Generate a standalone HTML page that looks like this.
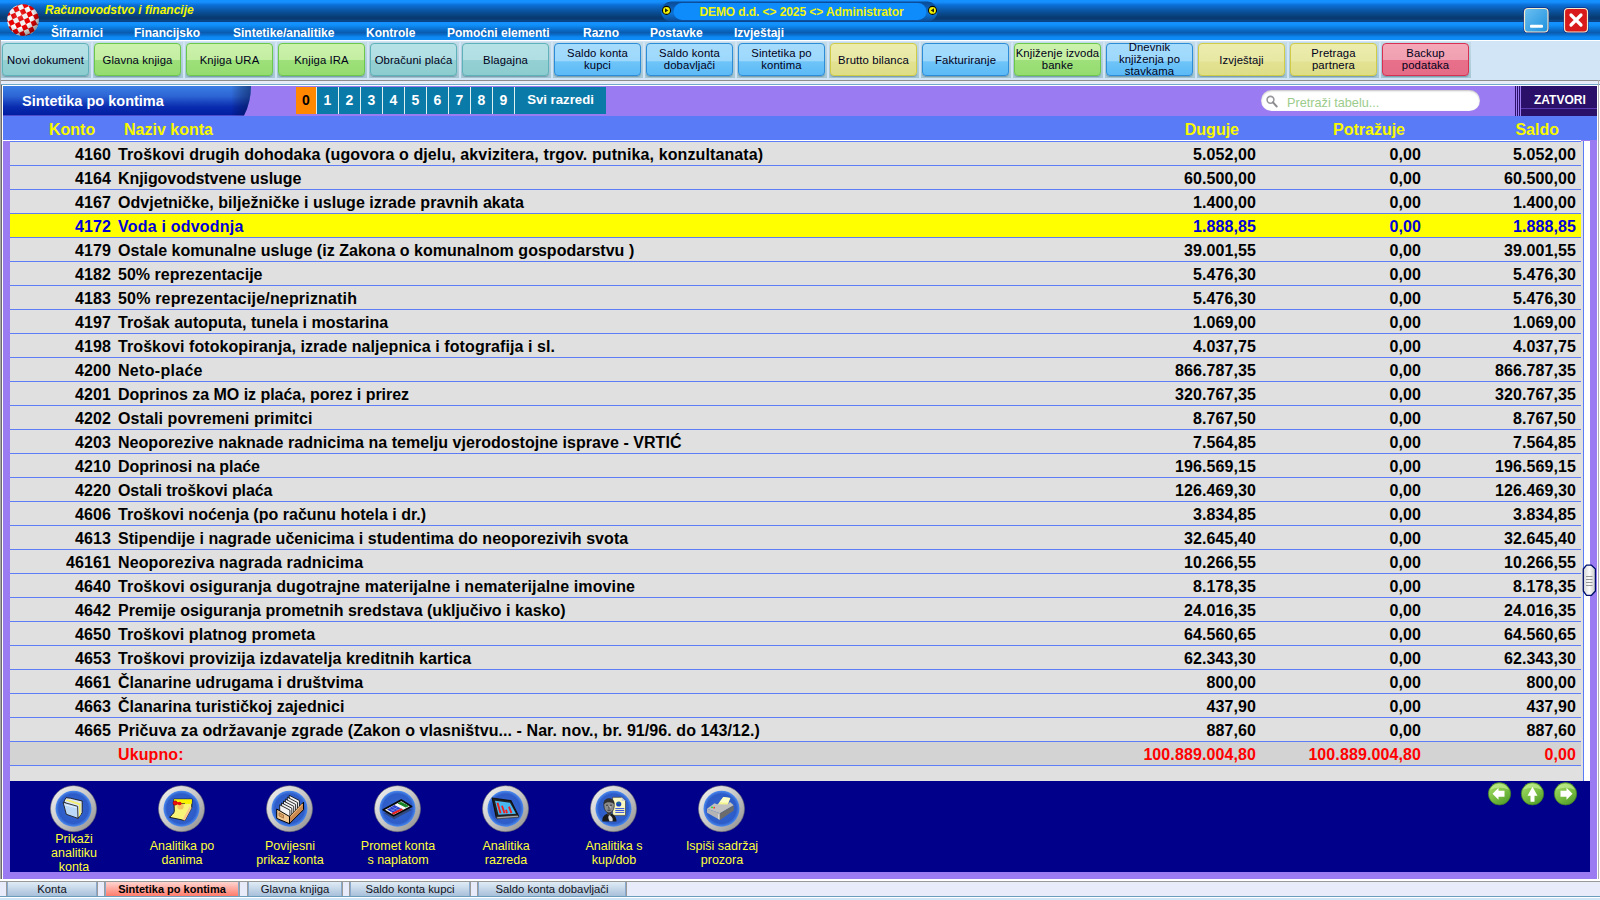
<!DOCTYPE html><html><head><meta charset="utf-8"><style>
*{box-sizing:border-box;margin:0;padding:0}
html,body{width:1600px;height:900px;overflow:hidden;background:#fff;font-family:"Liberation Sans",sans-serif}
.a{position:absolute}
#title{left:0;top:0;width:1600px;height:22px;background:linear-gradient(#1590ff 0px,#1590ff 2px,#0b6fd6 5px,#0a58a8 10px,#083c74 17px,#083a70 19px,#0a4a90 21px,#0a3e80 22px)}
#menu{left:0;top:22px;width:1600px;height:18px;background:linear-gradient(#1592ff 0px,#1090fa 3px,#0a6cc8 8px,#0a5cb0 10.5px,#0a70d0 13px,#0d88f4 15px,#0d8cf8 18px)}
.mi{top:25px;font-size:12px;font-weight:bold;color:#fff;white-space:nowrap;line-height:16px}
#apptitle{left:45px;top:2px;font-size:12px;font-weight:bold;font-style:italic;color:#f4f800;white-space:nowrap;line-height:16px}
#pill{left:661px;top:1px;width:277px;height:21px;border-radius:11px;background:#0a3a78}
#pill2{left:672px;top:3px;width:256px;height:17px;border-radius:9px;background:linear-gradient(#1a8cf8,#1080f0)}
.dot{width:9px;height:9px;border-radius:50%;background:#f0f000;border:1px solid #202000}
#pilltext{left:663px;top:4px;width:277px;text-align:center;font-size:12px;font-weight:bold;color:#f0f410;letter-spacing:-0.08px;line-height:16px;white-space:nowrap}
#toolbar{left:0;top:40px;width:1600px;height:40px;background:#d2e5f6;border-top:1px solid #fff;border-left:1px solid #a0a0a0}
.btn{top:43px;width:87px;height:33px;padding-top:1px;border-radius:4px;font-size:11.3px;color:#000018;text-align:center;display:flex;align-items:center;justify-content:center;line-height:12px;letter-spacing:0.12px;box-shadow:0 1px 1px rgba(60,100,120,0.45)}
.cell{top:42px;width:90px;height:36px;background:linear-gradient(#c4dce8,#a6c8d4)}
.teal{background:linear-gradient(#b6e2e6 0%,#b0dee2 50%,#94d0d4 52%,#8ccccf 100%);border:1px solid #5fb2b9}
.green{background:linear-gradient(#ccf2ac 0%,#c4eea2 50%,#9ee07a 52%,#94dc70 100%);border:1px solid #6cc84c}
.blue{background:linear-gradient(#a6dcfc 0%,#9cd8fc 55%,#6ec4f8 57%,#5cbaf6 100%);border:1px solid #2c8cd8}
.yellow{background:linear-gradient(#ececae 0%,#e8e8a4 55%,#e2e292 58%,#dede88 100%);border:1px solid #d0cc48}
.red{background:linear-gradient(#f4a8b8 0%,#f0a0b0 50%,#e8708a 52%,#e46c86 100%);border:1px solid #d83050}
#tbline{left:0;top:80px;width:1600px;height:1px;background:#8c8c8c}
#tbunder{left:0;top:81px;width:1600px;height:4px;background:#e6ecf8;border-bottom:1px solid #70a8c8}
#frame{left:0;top:80px;width:1600px;height:820px;border-left:1px solid #a0a0a0}
#purple{left:3px;top:86px;width:1594px;height:793px;background:#9b7bf2}
#ttl{left:3px;top:86px;width:248px;height:30px;background:linear-gradient(#3c7ee2 0%,#2a60d0 40%,#0a28b0 75%,#0018a0 100%);border-radius:0 0 40px 0/0 0 90px 0}
#ttltext{left:22px;top:93px;font-size:14.5px;font-weight:bold;color:#fff;white-space:nowrap;line-height:17px}
.tab{top:87px;height:27px;width:22px;background:#0a7aa8;color:#fff;font-size:14px;font-weight:bold;text-align:center;line-height:26px;border-left:1px solid #e0f0f0}
#hdr{left:3px;top:116px;width:1594px;height:24px;background:#5a7bf7}
.h{top:121px;font-size:16px;font-weight:bold;color:#f8f800;white-space:nowrap;line-height:18px}
#hwl{left:3px;top:140px;width:1578px;height:1px;background:#fff}
#tbl{left:10px;top:141px;width:1574px;height:640px;background:#e0e0e0;border-right:1px solid #5a7bf7}
#sbw{left:1584px;top:141px;width:6px;height:640px;background:#fff}
.r{left:10px;width:1571px;height:24px;border-top:1px solid #5f7df4;background:#e0e0e0}
.c{font-size:16px;font-weight:bold;color:#000;white-space:nowrap;line-height:18px;letter-spacing:0.1px}
#nav{left:10px;top:781px;width:1580px;height:91px;background:#00008a}
.il{font-size:12.5px;color:#ffff38;text-align:center;line-height:14px;white-space:nowrap}
#bot{left:0;top:879px;width:1600px;height:21px;background:#e8ecfa;border-top:2px solid #fff}
.bt{top:882px;height:14px;font-size:11.3px;color:#101020;text-align:center;line-height:14px;background:linear-gradient(#e0ecf6,#a8c0da);border-left:1px solid #88a8cc;border-right:1px solid #88a8cc;box-shadow:-1px 0 0 #9a9a9a,1px 0 0 #9a9a9a;white-space:nowrap}
</style></head><body>
<div class="a" id="title"></div><div class="a" id="menu"></div>
<div class="a" id="apptitle">Računovodstvo i financije</div>
<div class="a mi" style="left:51px">Šifrarnici</div>
<div class="a mi" style="left:134px">Financijsko</div>
<div class="a mi" style="left:233px">Sintetike/analitike</div>
<div class="a mi" style="left:366px">Kontrole</div>
<div class="a mi" style="left:447px">Pomoćni elementi</div>
<div class="a mi" style="left:583px">Razno</div>
<div class="a mi" style="left:650px">Postavke</div>
<div class="a mi" style="left:734px">Izvještaji</div>
<svg class="a" style="left:655px;top:0" width="290" height="24"><defs><linearGradient id="po" x1="0" y1="0" x2="0" y2="1"><stop offset="0" stop-color="#0a4a94"/><stop offset="0.3" stop-color="#0a5cb4"/><stop offset="0.6" stop-color="#0d74d8"/><stop offset="1" stop-color="#0a4a94"/></linearGradient></defs>
<rect x="6" y="1.5" width="276.5" height="20" rx="10" fill="url(#po)"/><rect x="18.5" y="3" width="253" height="17" rx="8.5" fill="#0e8cfc"/>
<circle cx="11.5" cy="10.4" r="4" fill="#f4f400" stroke="#000" stroke-width="1.1"/><path d="M10,8.2 L13.3,10.4 L10,12.6 Z" fill="#202010"/>
<circle cx="277.5" cy="10.4" r="4" fill="#f4f400" stroke="#000" stroke-width="1.1"/><path d="M279,8.2 L275.7,10.4 L279,12.6 Z" fill="#202010"/></svg>
<div class="a" id="pilltext">DEMO d.d. &lt;&gt; 2025 &lt;&gt; Administrator</div>
<svg class="a" style="left:7px;top:4px" width="32" height="32" viewBox="0 0 32 32"><defs><pattern id="chk" width="10" height="10" patternUnits="userSpaceOnUse" patternTransform="rotate(-25 16 16) translate(2 1)"><rect width="10" height="10" fill="#fff"/><rect width="5" height="5" fill="#f00000"/><rect x="5" y="5" width="5" height="5" fill="#f00000"/></pattern><radialGradient id="bsh" cx="0.38" cy="0.35" r="0.7"><stop offset="0" stop-color="#fff" stop-opacity="0.25"/><stop offset="0.55" stop-color="#000" stop-opacity="0"/><stop offset="1" stop-color="#000" stop-opacity="0.45"/></radialGradient></defs><circle cx="16" cy="16" r="15.8" fill="url(#chk)"/><circle cx="16" cy="16" r="15.8" fill="url(#bsh)"/></svg>
<svg class="a" style="left:1520px;top:4px" width="75" height="32" viewBox="0 0 75 32"><defs><linearGradient id="ming" x1="0" y1="0" x2="1" y2="1"><stop offset="0" stop-color="#6cc0f2"/><stop offset="1" stop-color="#1e90dc"/></linearGradient></defs>
<rect x="3.5" y="3.5" width="25.5" height="25.5" rx="4" fill="#0a1a80"/><rect x="4.5" y="4.5" width="23.5" height="23.5" rx="3.5" fill="url(#ming)" stroke="#f4ecc8" stroke-width="1.2"/><rect x="10" y="20.7" width="13" height="3" rx="1" fill="#fff"/>
<rect x="43.5" y="3.5" width="25" height="25.5" rx="4" fill="#0a1a80"/><rect x="44.5" y="4.5" width="23" height="23.5" rx="3.5" fill="#d81a1a" stroke="#f4ecc8" stroke-width="1.2"/><path d="M51,11 L61,21 M61,11 L51,21" stroke="#fff" stroke-width="3.2" stroke-linecap="round"/></svg>
<div class="a" id="toolbar"></div>
<div class="a cell" style="left:1px"></div>
<div class="a btn teal" style="left:2px;">Novi dokument</div>
<div class="a cell" style="left:93px"></div>
<div class="a btn green" style="left:94px;">Glavna knjiga</div>
<div class="a cell" style="left:185px"></div>
<div class="a btn green" style="left:186px;">Knjiga URA</div>
<div class="a cell" style="left:277px"></div>
<div class="a btn green" style="left:278px;">Knjiga IRA</div>
<div class="a cell" style="left:369px"></div>
<div class="a btn teal" style="left:370px;">Obračuni plaća</div>
<div class="a cell" style="left:461px"></div>
<div class="a btn teal" style="left:462px;">Blagajna</div>
<div class="a cell" style="left:553px"></div>
<div class="a btn blue" style="left:554px;padding-top:0;padding-bottom:1.5px">Saldo konta<br>kupci</div>
<div class="a cell" style="left:645px"></div>
<div class="a btn blue" style="left:646px;padding-top:0;padding-bottom:1.5px">Saldo konta<br>dobavljači</div>
<div class="a cell" style="left:737px"></div>
<div class="a btn blue" style="left:738px;padding-top:0;padding-bottom:1.5px">Sintetika po<br>kontima</div>
<div class="a cell" style="left:829px"></div>
<div class="a btn yellow" style="left:830px;">Brutto bilanca</div>
<div class="a cell" style="left:921px"></div>
<div class="a btn blue" style="left:922px;">Fakturiranje</div>
<div class="a cell" style="left:1013px"></div>
<div class="a btn green" style="left:1014px;padding-top:0;padding-bottom:1.5px">Knjiženje izvoda<br>banke</div>
<div class="a cell" style="left:1105px"></div>
<div class="a btn blue" style="left:1106px;padding-top:0;padding-bottom:1.5px">Dnevnik<br>knjiženja po<br>stavkama</div>
<div class="a cell" style="left:1197px"></div>
<div class="a btn yellow" style="left:1198px;">Izvještaji</div>
<div class="a cell" style="left:1289px"></div>
<div class="a btn yellow" style="left:1290px;padding-top:0;padding-bottom:1.5px">Pretraga<br>partnera</div>
<div class="a cell" style="left:1381px"></div>
<div class="a btn red" style="left:1382px;padding-top:0;padding-bottom:1.5px">Backup<br>podataka</div>
<div class="a" id="tbline"></div><div class="a" id="tbunder"></div>
<div class="a" style="left:0;top:40px;width:1px;height:860px;background:#a8a8a8"></div><div class="a" style="left:1px;top:85px;width:1px;height:795px;background:#6a6a6a"></div><div class="a" style="left:1598px;top:80px;width:1px;height:802px;background:#b0b0b0"></div><div class="a" id="purple"></div>
<svg class="a" style="left:0;top:86px" width="260" height="30"><defs><linearGradient id="tg" x1="0" y1="0" x2="0" y2="1"><stop offset="0" stop-color="#3a7ee4"/><stop offset="0.35" stop-color="#2c64d4"/><stop offset="0.7" stop-color="#0a2cb0"/><stop offset="1" stop-color="#001ca0"/></linearGradient><linearGradient id="tsh" x1="0" y1="0" x2="1" y2="0"><stop offset="0" stop-color="#000" stop-opacity="0"/><stop offset="0.92" stop-color="#000" stop-opacity="0"/><stop offset="1" stop-color="#001040" stop-opacity="0.5"/></linearGradient></defs><path d="M3,0 H251 A51,58.6 0 0 1 244,29.6 H3 Z" fill="url(#tg)"/><path d="M3,0 H251 A51,58.6 0 0 1 244,29.6 H3 Z" fill="url(#tsh)"/></svg><div class="a" id="ttltext">Sintetika po kontima</div>
<div class="a tab" style="left:296px;background:#ff8800;color:#000;border-left:none;width:20px">0</div>
<div class="a tab" style="left:316px">1</div>
<div class="a tab" style="left:338px">2</div>
<div class="a tab" style="left:360px">3</div>
<div class="a tab" style="left:382px">4</div>
<div class="a tab" style="left:404px">5</div>
<div class="a tab" style="left:426px">6</div>
<div class="a tab" style="left:448px">7</div>
<div class="a tab" style="left:470px">8</div>
<div class="a tab" style="left:492px">9</div>
<div class="a tab" style="left:514px;width:92px;font-size:13.2px">Svi razredi</div>
<div class="a" style="left:1261px;top:90px;width:219px;height:21px;border-radius:11px;background:#fff;box-shadow:inset 0 1px 2px rgba(0,0,0,0.25)"></div>
<div class="a" style="left:1287px;top:95px;font-size:12.7px;color:#9ccc8c;line-height:16px;white-space:nowrap">Pretraži tabelu...</div>
<svg class="a" style="left:1264px;top:94px" width="14" height="14"><circle cx="6.5" cy="5.8" r="3.4" fill="none" stroke="#98989c" stroke-width="1.6"/><path d="M9,8.4 L12.6,12.4" stroke="#8c8c90" stroke-width="2.1" stroke-linecap="round"/></svg>
<div class="a" style="left:1521px;top:86px;width:76px;height:30px;background:#2a1068"></div><div class="a" style="left:1521px;top:108px;width:76px;height:1px;background:#5a3ab0"></div><div class="a" style="left:1517px;top:86px;width:1px;height:30px;background:#2a1068"></div><div class="a" style="left:1519px;top:86px;width:1px;height:30px;background:#2a1068"></div>
<div class="a" style="left:1515px;top:86px;width:1px;height:30px;background:#2a1068"></div>
<div class="a" style="left:1534px;top:92px;font-size:12px;font-weight:bold;color:#fff;line-height:16px;white-space:nowrap">ZATVORI</div>
<div class="a" id="hdr"></div>
<div class="a h" style="left:49px">Konto</div><div class="a h" style="left:124px">Naziv konta</div>
<div class="a h" style="right:361px">Duguje</div><div class="a h" style="right:195px">Potražuje</div><div class="a h" style="right:41px">Saldo</div>
<div class="a" id="tbl"></div><div class="a" id="sbw"></div><div class="a" id="hwl"></div>
<div class="a r" style="top:141px;background:#e0e0e0"></div>
<div class="a c" style="top:146px;right:1489px;color:#000">4160</div>
<div class="a c" style="top:146px;left:118px;color:#000;letter-spacing:0.106px">Troškovi drugih dohodaka (ugovora o djelu, akvizitera, trgov. putnika, konzultanata)</div>
<div class="a c" style="top:146px;right:344px;color:#000">5.052,00</div>
<div class="a c" style="top:146px;right:179px;color:#000">0,00</div>
<div class="a c" style="top:146px;right:24px;color:#000">5.052,00</div>
<div class="a r" style="top:165px;background:#e0e0e0"></div>
<div class="a c" style="top:170px;right:1489px;color:#000">4164</div>
<div class="a c" style="top:170px;left:118px;color:#000;letter-spacing:-0.077px">Knjigovodstvene usluge</div>
<div class="a c" style="top:170px;right:344px;color:#000">60.500,00</div>
<div class="a c" style="top:170px;right:179px;color:#000">0,00</div>
<div class="a c" style="top:170px;right:24px;color:#000">60.500,00</div>
<div class="a r" style="top:189px;background:#e0e0e0"></div>
<div class="a c" style="top:194px;right:1489px;color:#000">4167</div>
<div class="a c" style="top:194px;left:118px;color:#000;letter-spacing:0.043px">Odvjetničke, bilježničke i usluge izrade pravnih akata</div>
<div class="a c" style="top:194px;right:344px;color:#000">1.400,00</div>
<div class="a c" style="top:194px;right:179px;color:#000">0,00</div>
<div class="a c" style="top:194px;right:24px;color:#000">1.400,00</div>
<div class="a r" style="top:213px;background:#ffff00"></div>
<div class="a c" style="top:218px;right:1489px;color:#0000d8">4172</div>
<div class="a c" style="top:218px;left:118px;color:#0000d8;letter-spacing:0.209px">Voda i odvodnja</div>
<div class="a c" style="top:218px;right:344px;color:#0000d8">1.888,85</div>
<div class="a c" style="top:218px;right:179px;color:#0000d8">0,00</div>
<div class="a c" style="top:218px;right:24px;color:#0000d8">1.888,85</div>
<div class="a r" style="top:237px;background:#e0e0e0"></div>
<div class="a c" style="top:242px;right:1489px;color:#000">4179</div>
<div class="a c" style="top:242px;left:118px;color:#000;letter-spacing:0.024px">Ostale komunalne usluge (iz Zakona o komunalnom gospodarstvu )</div>
<div class="a c" style="top:242px;right:344px;color:#000">39.001,55</div>
<div class="a c" style="top:242px;right:179px;color:#000">0,00</div>
<div class="a c" style="top:242px;right:24px;color:#000">39.001,55</div>
<div class="a r" style="top:261px;background:#e0e0e0"></div>
<div class="a c" style="top:266px;right:1489px;color:#000">4182</div>
<div class="a c" style="top:266px;left:118px;color:#000;letter-spacing:0.025px">50% reprezentacije</div>
<div class="a c" style="top:266px;right:344px;color:#000">5.476,30</div>
<div class="a c" style="top:266px;right:179px;color:#000">0,00</div>
<div class="a c" style="top:266px;right:24px;color:#000">5.476,30</div>
<div class="a r" style="top:285px;background:#e0e0e0"></div>
<div class="a c" style="top:290px;right:1489px;color:#000">4183</div>
<div class="a c" style="top:290px;left:118px;color:#000;letter-spacing:0.177px">50% reprezentacije/nepriznatih</div>
<div class="a c" style="top:290px;right:344px;color:#000">5.476,30</div>
<div class="a c" style="top:290px;right:179px;color:#000">0,00</div>
<div class="a c" style="top:290px;right:24px;color:#000">5.476,30</div>
<div class="a r" style="top:309px;background:#e0e0e0"></div>
<div class="a c" style="top:314px;right:1489px;color:#000">4197</div>
<div class="a c" style="top:314px;left:118px;color:#000;letter-spacing:0.024px">Trošak autoputa, tunela i mostarina</div>
<div class="a c" style="top:314px;right:344px;color:#000">1.069,00</div>
<div class="a c" style="top:314px;right:179px;color:#000">0,00</div>
<div class="a c" style="top:314px;right:24px;color:#000">1.069,00</div>
<div class="a r" style="top:333px;background:#e0e0e0"></div>
<div class="a c" style="top:338px;right:1489px;color:#000">4198</div>
<div class="a c" style="top:338px;left:118px;color:#000;letter-spacing:0.082px">Troškovi fotokopiranja, izrade naljepnica i fotografija i sl.</div>
<div class="a c" style="top:338px;right:344px;color:#000">4.037,75</div>
<div class="a c" style="top:338px;right:179px;color:#000">0,00</div>
<div class="a c" style="top:338px;right:24px;color:#000">4.037,75</div>
<div class="a r" style="top:357px;background:#e0e0e0"></div>
<div class="a c" style="top:362px;right:1489px;color:#000">4200</div>
<div class="a c" style="top:362px;left:118px;color:#000;letter-spacing:0.3px">Neto-plaće</div>
<div class="a c" style="top:362px;right:344px;color:#000">866.787,35</div>
<div class="a c" style="top:362px;right:179px;color:#000">0,00</div>
<div class="a c" style="top:362px;right:24px;color:#000">866.787,35</div>
<div class="a r" style="top:381px;background:#e0e0e0"></div>
<div class="a c" style="top:386px;right:1489px;color:#000">4201</div>
<div class="a c" style="top:386px;left:118px;color:#000;letter-spacing:-0.039px">Doprinos za MO iz plaća, porez i prirez</div>
<div class="a c" style="top:386px;right:344px;color:#000">320.767,35</div>
<div class="a c" style="top:386px;right:179px;color:#000">0,00</div>
<div class="a c" style="top:386px;right:24px;color:#000">320.767,35</div>
<div class="a r" style="top:405px;background:#e0e0e0"></div>
<div class="a c" style="top:410px;right:1489px;color:#000">4202</div>
<div class="a c" style="top:410px;left:118px;color:#000;letter-spacing:0.097px">Ostali povremeni primitci</div>
<div class="a c" style="top:410px;right:344px;color:#000">8.767,50</div>
<div class="a c" style="top:410px;right:179px;color:#000">0,00</div>
<div class="a c" style="top:410px;right:24px;color:#000">8.767,50</div>
<div class="a r" style="top:429px;background:#e0e0e0"></div>
<div class="a c" style="top:434px;right:1489px;color:#000">4203</div>
<div class="a c" style="top:434px;left:118px;color:#000;letter-spacing:0.048px">Neoporezive naknade radnicima na temelju vjerodostojne isprave - VRTIĆ</div>
<div class="a c" style="top:434px;right:344px;color:#000">7.564,85</div>
<div class="a c" style="top:434px;right:179px;color:#000">0,00</div>
<div class="a c" style="top:434px;right:24px;color:#000">7.564,85</div>
<div class="a r" style="top:453px;background:#e0e0e0"></div>
<div class="a c" style="top:458px;right:1489px;color:#000">4210</div>
<div class="a c" style="top:458px;left:118px;color:#000;letter-spacing:-0.067px">Doprinosi na plaće</div>
<div class="a c" style="top:458px;right:344px;color:#000">196.569,15</div>
<div class="a c" style="top:458px;right:179px;color:#000">0,00</div>
<div class="a c" style="top:458px;right:24px;color:#000">196.569,15</div>
<div class="a r" style="top:477px;background:#e0e0e0"></div>
<div class="a c" style="top:482px;right:1489px;color:#000">4220</div>
<div class="a c" style="top:482px;left:118px;color:#000;letter-spacing:-0.106px">Ostali troškovi plaća</div>
<div class="a c" style="top:482px;right:344px;color:#000">126.469,30</div>
<div class="a c" style="top:482px;right:179px;color:#000">0,00</div>
<div class="a c" style="top:482px;right:24px;color:#000">126.469,30</div>
<div class="a r" style="top:501px;background:#e0e0e0"></div>
<div class="a c" style="top:506px;right:1489px;color:#000">4606</div>
<div class="a c" style="top:506px;left:118px;color:#000;letter-spacing:0.012px">Troškovi noćenja (po računu hotela i dr.)</div>
<div class="a c" style="top:506px;right:344px;color:#000">3.834,85</div>
<div class="a c" style="top:506px;right:179px;color:#000">0,00</div>
<div class="a c" style="top:506px;right:24px;color:#000">3.834,85</div>
<div class="a r" style="top:525px;background:#e0e0e0"></div>
<div class="a c" style="top:530px;right:1489px;color:#000">4613</div>
<div class="a c" style="top:530px;left:118px;color:#000;letter-spacing:0.053px">Stipendije i nagrade učenicima i studentima do neoporezivih svota</div>
<div class="a c" style="top:530px;right:344px;color:#000">32.645,40</div>
<div class="a c" style="top:530px;right:179px;color:#000">0,00</div>
<div class="a c" style="top:530px;right:24px;color:#000">32.645,40</div>
<div class="a r" style="top:549px;background:#e0e0e0"></div>
<div class="a c" style="top:554px;right:1489px;color:#000">46161</div>
<div class="a c" style="top:554px;left:118px;color:#000;letter-spacing:0.116px">Neoporeziva nagrada radnicima</div>
<div class="a c" style="top:554px;right:344px;color:#000">10.266,55</div>
<div class="a c" style="top:554px;right:179px;color:#000">0,00</div>
<div class="a c" style="top:554px;right:24px;color:#000">10.266,55</div>
<div class="a r" style="top:573px;background:#e0e0e0"></div>
<div class="a c" style="top:578px;right:1489px;color:#000">4640</div>
<div class="a c" style="top:578px;left:118px;color:#000;letter-spacing:0.129px">Troškovi osiguranja dugotrajne materijalne i nematerijalne imovine</div>
<div class="a c" style="top:578px;right:344px;color:#000">8.178,35</div>
<div class="a c" style="top:578px;right:179px;color:#000">0,00</div>
<div class="a c" style="top:578px;right:24px;color:#000">8.178,35</div>
<div class="a r" style="top:597px;background:#e0e0e0"></div>
<div class="a c" style="top:602px;right:1489px;color:#000">4642</div>
<div class="a c" style="top:602px;left:118px;color:#000;letter-spacing:-0.01px">Premije osiguranja prometnih sredstava (uključivo i kasko)</div>
<div class="a c" style="top:602px;right:344px;color:#000">24.016,35</div>
<div class="a c" style="top:602px;right:179px;color:#000">0,00</div>
<div class="a c" style="top:602px;right:24px;color:#000">24.016,35</div>
<div class="a r" style="top:621px;background:#e0e0e0"></div>
<div class="a c" style="top:626px;right:1489px;color:#000">4650</div>
<div class="a c" style="top:626px;left:118px;color:#000;letter-spacing:0.065px">Troškovi platnog prometa</div>
<div class="a c" style="top:626px;right:344px;color:#000">64.560,65</div>
<div class="a c" style="top:626px;right:179px;color:#000">0,00</div>
<div class="a c" style="top:626px;right:24px;color:#000">64.560,65</div>
<div class="a r" style="top:645px;background:#e0e0e0"></div>
<div class="a c" style="top:650px;right:1489px;color:#000">4653</div>
<div class="a c" style="top:650px;left:118px;color:#000;letter-spacing:0.096px">Troškovi provizija izdavatelja kreditnih kartica</div>
<div class="a c" style="top:650px;right:344px;color:#000">62.343,30</div>
<div class="a c" style="top:650px;right:179px;color:#000">0,00</div>
<div class="a c" style="top:650px;right:24px;color:#000">62.343,30</div>
<div class="a r" style="top:669px;background:#e0e0e0"></div>
<div class="a c" style="top:674px;right:1489px;color:#000">4661</div>
<div class="a c" style="top:674px;left:118px;color:#000;letter-spacing:0.02px">Članarine udrugama i društvima</div>
<div class="a c" style="top:674px;right:344px;color:#000">800,00</div>
<div class="a c" style="top:674px;right:179px;color:#000">0,00</div>
<div class="a c" style="top:674px;right:24px;color:#000">800,00</div>
<div class="a r" style="top:693px;background:#e0e0e0"></div>
<div class="a c" style="top:698px;right:1489px;color:#000">4663</div>
<div class="a c" style="top:698px;left:118px;color:#000;letter-spacing:0.019px">Članarina turističkoj zajednici</div>
<div class="a c" style="top:698px;right:344px;color:#000">437,90</div>
<div class="a c" style="top:698px;right:179px;color:#000">0,00</div>
<div class="a c" style="top:698px;right:24px;color:#000">437,90</div>
<div class="a r" style="top:717px;background:#e0e0e0"></div>
<div class="a c" style="top:722px;right:1489px;color:#000">4665</div>
<div class="a c" style="top:722px;left:118px;color:#000;letter-spacing:0.073px">Pričuva za održavanje zgrade (Zakon o vlasništvu... - Nar. nov., br. 91/96. do 143/12.)</div>
<div class="a c" style="top:722px;right:344px;color:#000">887,60</div>
<div class="a c" style="top:722px;right:179px;color:#000">0,00</div>
<div class="a c" style="top:722px;right:24px;color:#000">887,60</div>
<div class="a r" style="top:741px;background:#d3d3d3"></div>
<div class="a c" style="top:746px;right:1489px;color:#ff0000"></div>
<div class="a c" style="top:746px;left:118px;color:#ff0000;letter-spacing:0.1px">Ukupno:</div>
<div class="a c" style="top:746px;right:344px;color:#ff0000">100.889.004,80</div>
<div class="a c" style="top:746px;right:179px;color:#ff0000">100.889.004,80</div>
<div class="a c" style="top:746px;right:24px;color:#ff0000">0,00</div>
<div class="a" style="left:10px;top:765px;width:1571px;height:1px;background:#5f7df4"></div>
<svg class="a" style="left:1582px;top:564px" width="16" height="34"><defs><linearGradient id="thg" x1="0" y1="0" x2="1" y2="0"><stop offset="0" stop-color="#d4d4d4"/><stop offset="0.5" stop-color="#fcfcfc"/><stop offset="1" stop-color="#c8c8c8"/></linearGradient></defs><path d="M4.5,1.2 H9.5 L13.4,5 V27 L9.5,31.3 H4.5 L1.3,27 V5 Z" fill="url(#thg)" stroke="#00106a" stroke-width="1.3" stroke-linejoin="round"/><path d="M4,12.5 H10.5 M4,15.5 H10.5 M4,18.5 H10.5 M4,21.5 H10.5" stroke="#8c8c8c" stroke-width="0.9"/></svg>
<div class="a" id="nav"></div>
<svg class="a" style="left:0;top:0" width="1600" height="900"><defs><linearGradient id="ring" x1="0" y1="0" x2="1" y2="1"><stop offset="0" stop-color="#f4f4f4"/><stop offset="0.5" stop-color="#c8c8c8"/><stop offset="1" stop-color="#8c8c8c"/></linearGradient><radialGradient id="disc" cx="0.5" cy="0.5" r="0.5"><stop offset="0" stop-color="#3466d2"/><stop offset="0.82" stop-color="#2d5cc8"/><stop offset="1" stop-color="#4a8af0"/></radialGradient><linearGradient id="grn" x1="0.2" y1="0" x2="0.8" y2="1"><stop offset="0" stop-color="#a4dc68"/><stop offset="0.5" stop-color="#7cc044"/><stop offset="1" stop-color="#4e9c2a"/></linearGradient></defs>
<g transform="translate(73.5,808.7)"><circle r="23" fill="url(#ring)"/><circle r="23" fill="none" stroke="#707070" stroke-width="0.6"/><circle r="18" fill="url(#disc)"/><path d="M-9.5,-7.5 L-7.5,-11 L-3,-10.5 L1,-9.5 L8.7,-7.7 L8.7,4 L4.5,9.7 Z" fill="#dce6f6" stroke="#181818" stroke-width="0.9"/><path d="M-8,-8.2 L5.5,-3.6 L5.5,8 L7.2,5.8 L7.2,-5.2 L-6,-9.5 Z" fill="#f4ee70"/><path d="M-10.4,-6.5 L4.1,-2.4 L4.5,9.7 L-7.2,5.6 Z" fill="#bcd8f8" stroke="#202020" stroke-width="0.9"/><path d="M-9,-4 L3,-1" stroke="#f0f8ff" stroke-width="0.8"/></g>
<g transform="translate(181.5,808.7)"><circle r="23" fill="url(#ring)"/><circle r="23" fill="none" stroke="#707070" stroke-width="0.6"/><circle r="18" fill="url(#disc)"/><path d="M-7.6,-9.5 L10.5,-9.5 L10.2,-1 L3.4,11.8 L-11.9,8.6 C-10,6 -7.5,5 -7.2,2.5 Z" fill="#f8f478" stroke="#101010" stroke-width="0.9"/><path d="M-7.6,-9.5 L10.5,-9.5 L10.3,-5 L-7.5,-4 Z" fill="#f8f400"/><path d="M10.2,-1 L3.4,11.8 L1,11 L8,-2 Z" fill="#f8c890"/><circle cx="-1" cy="-2.5" r="3.2" fill="#f0a050" opacity="0.55"/><path d="M-2,-5.2 L3.5,-5.2" stroke="#303030" stroke-width="0.7"/><circle cx="-6.4" cy="-5.7" r="2.2" fill="#f01010" stroke="#600000" stroke-width="0.4"/><path d="M-6,-5.6 L-1.5,-5.3" stroke="#e01010" stroke-width="2.2"/><circle cx="-1.8" cy="-5.2" r="1.8" fill="#e81010"/></g>
<g transform="translate(289.5,808.7)"><circle r="23" fill="url(#ring)"/><circle r="23" fill="none" stroke="#707070" stroke-width="0.6"/><circle r="18" fill="url(#disc)"/><path d="M-0.3,-13.4 L9.9,-8.1 L9.9,3.9 L-0.3,-1.4 Z" fill="#f4f4f4" stroke="#000" stroke-width="0.8"/><path d="M-2.2,-11.5 L8.0,-6.2 L8.0,5.8 L-2.2,0.5 Z" fill="#f4f4f4" stroke="#000" stroke-width="0.8"/><path d="M-4.1,-9.6 L6.1,-4.3 L6.1,7.7 L-4.1,2.4 Z" fill="#f4f4f4" stroke="#000" stroke-width="0.8"/><path d="M-6.0,-7.7 L4.2,-2.4 L4.2,9.6 L-6.0,4.3 Z" fill="#f4f4f4" stroke="#000" stroke-width="0.8"/><path d="M-7.9,-5.8 L2.3,-0.5 L2.3,11.5 L-7.9,6.2 Z" fill="#f4f4f4" stroke="#000" stroke-width="0.8"/><path d="M-9.8,-3.9 L0.4,1.4 L0.4,13.4 L-9.8,8.1 Z" fill="#f4f4f4" stroke="#000" stroke-width="0.8"/><path d="M-12.8,0.3 L0,7.8 L0,15 L-12.8,9.7 Z" fill="#f2c890" stroke="#000" stroke-width="1"/><path d="M0,7.8 L14,-6.5 L14,1 L0,15 Z" fill="#c88850" stroke="#000" stroke-width="1"/><path d="M1.2,7.6 L13,-4.6" stroke="#f0b878" stroke-width="1.1"/><path d="M-10.5,4 L-6,6.3 L-6,9.5 L-10.5,7.2 Z" fill="#d8a060" stroke="#704020" stroke-width="0.5"/></g>
<g transform="translate(397.5,808.7)"><circle r="23" fill="url(#ring)"/><circle r="23" fill="none" stroke="#707070" stroke-width="0.6"/><circle r="18" fill="url(#disc)"/><path d="M-13.5,4.5 L-3.4,10.5 L14.2,1.2 L4,-5 Z" fill="#303030" opacity="0.5"/><path d="M-14.3,1 L3.7,-8.6 L14,-2.2 L-3.9,7.1 Z" fill="#f8f8f8" stroke="#080808" stroke-width="1.8" stroke-linejoin="round"/><path d="M-10.5,0.7 L-3.1,-3.7 L3.7,-0.1 L-4.7,4.4 Z" fill="#2840d0"/><path d="M-8.5,-0.5 L-1,3.3 M-6,-2 L1.5,1.8 M-7,3 L0,-1.5 M-4,4 L2,0.5" stroke="#a0b0f0" stroke-width="0.5"/><path d="M-5.2,4.6 L3.9,0.2 L5,0.9 L-4.1,5.3 Z" fill="#e81818" stroke="#e81818" stroke-width="1"/><path d="M0.6,-5.4 L3.65,-6.5 L10.8,-2.7 L8.2,-1.6 Z" fill="#108020" stroke="#108020" stroke-width="0.8"/></g>
<g transform="translate(505.5,808.7)"><circle r="23" fill="url(#ring)"/><circle r="23" fill="none" stroke="#707070" stroke-width="0.6"/><circle r="18" fill="url(#disc)"/><path d="M-13.3,-10.7 L5.5,-8 L13.1,7.5 L-9.2,9 Z" fill="#202020" stroke="#101010" stroke-width="1.2" stroke-linejoin="round"/><path d="M-10.5,-8 L4.5,-6 L10.5,5 L-7,6 Z" fill="#48b8f0"/><path d="M-8,-6 L-5,4.5 M-3.5,-3 L-1,4.5 M0.5,1 L1.5,4.5 M3.5,-2 L6,4.5" stroke="#f02020" stroke-width="1.9"/><path d="M-9,8 L12.5,6.5 L13.5,8.5 L-8.5,10.2 Z" fill="#a8a8a8" stroke="#202020" stroke-width="0.6"/></g>
<g transform="translate(613.5,808.7)"><circle r="23" fill="url(#ring)"/><circle r="23" fill="none" stroke="#707070" stroke-width="0.6"/><circle r="18" fill="url(#disc)"/><path d="M-0.9,-11.4 L8.2,-11.4 L12,-7.7 L12,6.7 L-0.9,6.7 Z" fill="#f8f8c0" stroke="#404040" stroke-width="0.7"/><path d="M8.2,-11.4 L8.2,-7.7 L12,-7.7 Z" fill="#d0d0d0"/><circle cx="5.2" cy="-4.7" r="2.6" fill="#1840c0"/><path d="M3.8,-5.5 C4.5,-6.5 6,-6 6,-4.5" stroke="#20a040" stroke-width="1" fill="none"/><path d="M1.8,-0.1 H10.8 M1.8,1.8 H10.8 M1.8,3.7 H10.8" stroke="#2040e0" stroke-width="0.9"/><path d="M-11.1,12.7 C-11.5,8 -9,6 -6.5,5 L-2,5 C1,6 3,9 3,12.7 Z" fill="#181818"/><path d="M-4,6 C-2,8 0,9 -1,12.5 L-4,12.5 C-5,10 -6,8 -4,6 Z" fill="#d8d8d8"/><path d="M-6.5,3 L-6,6.5 L-2.5,6.5 L-2,3 Z" fill="#404040"/><path d="M-4.2,-9.8 C-8.5,-9.8 -10,-7 -9.6,-3 C-9.3,1 -7.5,4 -4.5,4.2 C-1.5,4.2 0.5,1 0.8,-3 C1,-7 -0.5,-9.8 -4.2,-9.8 Z" fill="#8c8c8c" stroke="#101010" stroke-width="0.6"/><path d="M-9.6,-4.5 C-10,-9 -7,-10.5 -4,-10.2 C-1,-10 1,-8 0.8,-4.5 C-1,-7 -7,-7.5 -9.6,-4.5 Z" fill="#303030"/><path d="M-7.5,-3.5 H-5.5 M-3.5,-3.5 H-1.5 M-4.5,-2.5 V0 M-6,1.5 H-3" stroke="#202020" stroke-width="0.8"/><path d="M-4.5,-3 C-4,-1 -3,0 -2,-2" fill="#d0d0d0" opacity="0.8"/></g>
<g transform="translate(721.5,808.7)"><circle r="23" fill="url(#ring)"/><circle r="23" fill="none" stroke="#707070" stroke-width="0.6"/><circle r="18" fill="url(#disc)"/><path d="M-5.5,-2 L1.8,-11.7 L8.8,-10.7 L6.2,-3.5 Z" fill="#f4f490"/><path d="M-2,-6.5 L1.8,-11.7 L8.8,-10.7 L6.5,-6 Z" fill="#fcfcc8"/><path d="M-14.5,0 L-7,-5.5 L-4.5,-4.5 L6,-4.2 L8.5,-6.7 L12.2,-3.4 L-1.5,4.5 Z" fill="#c0c0c0"/><path d="M-14.5,0 L-1.5,4.5 L-1.5,11.2 L-14.5,4 Z" fill="#b4b4b4"/><path d="M-1.5,4.5 L12.2,-3.4 L12.2,1.8 L-1.5,11.2 Z" fill="#6c6c6c"/><path d="M-3,5.5 L-3,10.5" stroke="#e0e0e0" stroke-width="0.8"/><circle cx="-9.5" cy="-1.4" r="0.9" fill="#20e020"/><circle cx="-7.3" cy="-1" r="0.9" fill="#f04020"/></g>
<g transform="translate(1499.5,793.8)"><circle r="11.2" fill="url(#grn)" stroke="#3c7c20" stroke-width="0.7"/><path d="M-9.5,-4 A10.5,10.5 0 0 1 9.5,-4 A16,9 0 0 0 -9.5,-4 Z" fill="#d0f8a0" opacity="0.55"/><path d="M-7,0 L-1,-6 L-1,-3 L5,-3 L5,3 L-1,3 L-1,6 Z" fill="#fff"/></g>
<g transform="translate(1532.5,793.8)"><circle r="11.2" fill="url(#grn)" stroke="#3c7c20" stroke-width="0.7"/><path d="M-9.5,-4 A10.5,10.5 0 0 1 9.5,-4 A16,9 0 0 0 -9.5,-4 Z" fill="#d0f8a0" opacity="0.55"/><path d="M0,-7 L-5,2 L-2,2 L-2,8 L2,8 L2,2 L5,2 Z" fill="#fff"/></g>
<g transform="translate(1565.5,793.8)"><circle r="11.2" fill="url(#grn)" stroke="#3c7c20" stroke-width="0.7"/><path d="M-9.5,-4 A10.5,10.5 0 0 1 9.5,-4 A16,9 0 0 0 -9.5,-4 Z" fill="#d0f8a0" opacity="0.55"/><path d="M7,0 L1,-6 L1,-3 L-5,-3 L-5,3 L1,3 L1,6 Z" fill="#fff"/></g>
</svg>
<div class="a il" style="left:14px;width:120px;top:831.5px">Prikaži<br>analitiku<br>konta</div>
<div class="a il" style="left:122px;width:120px;top:838.5px">Analitika po<br>danima</div>
<div class="a il" style="left:230px;width:120px;top:838.5px">Povijesni<br>prikaz konta</div>
<div class="a il" style="left:338px;width:120px;top:838.5px">Promet konta<br>s naplatom</div>
<div class="a il" style="left:446px;width:120px;top:838.5px">Analitika<br>razreda</div>
<div class="a il" style="left:554px;width:120px;top:838.5px">Analitika s<br>kup/dob</div>
<div class="a il" style="left:662px;width:120px;top:838.5px">Ispiši sadržaj<br>prozora</div>
<div class="a" id="bot"></div>
<div class="a bt" style="left:7px;width:90px;">Konta</div>
<div class="a bt" style="left:105px;width:134px;background:linear-gradient(#ffd4d0,#ff7c6c);font-weight:bold;color:#000;font-size:11px">Sintetika po kontima</div>
<div class="a bt" style="left:248px;width:94px;">Glavna knjiga</div>
<div class="a bt" style="left:350px;width:120px;">Saldo konta kupci</div>
<div class="a bt" style="left:478px;width:148px;">Saldo konta dobavljači</div>
<div class="a" style="left:0;top:881px;width:1600px;height:1px;background:#999"></div><div class="a" style="left:0;top:896px;width:1600px;height:1px;background:#6a9cbc"></div><div class="a" style="left:0;top:897px;width:1600px;height:1px;background:#fff"></div><div class="a" style="left:0;top:898px;width:1600px;height:2px;background:#d0e4f8"></div>
</body></html>
